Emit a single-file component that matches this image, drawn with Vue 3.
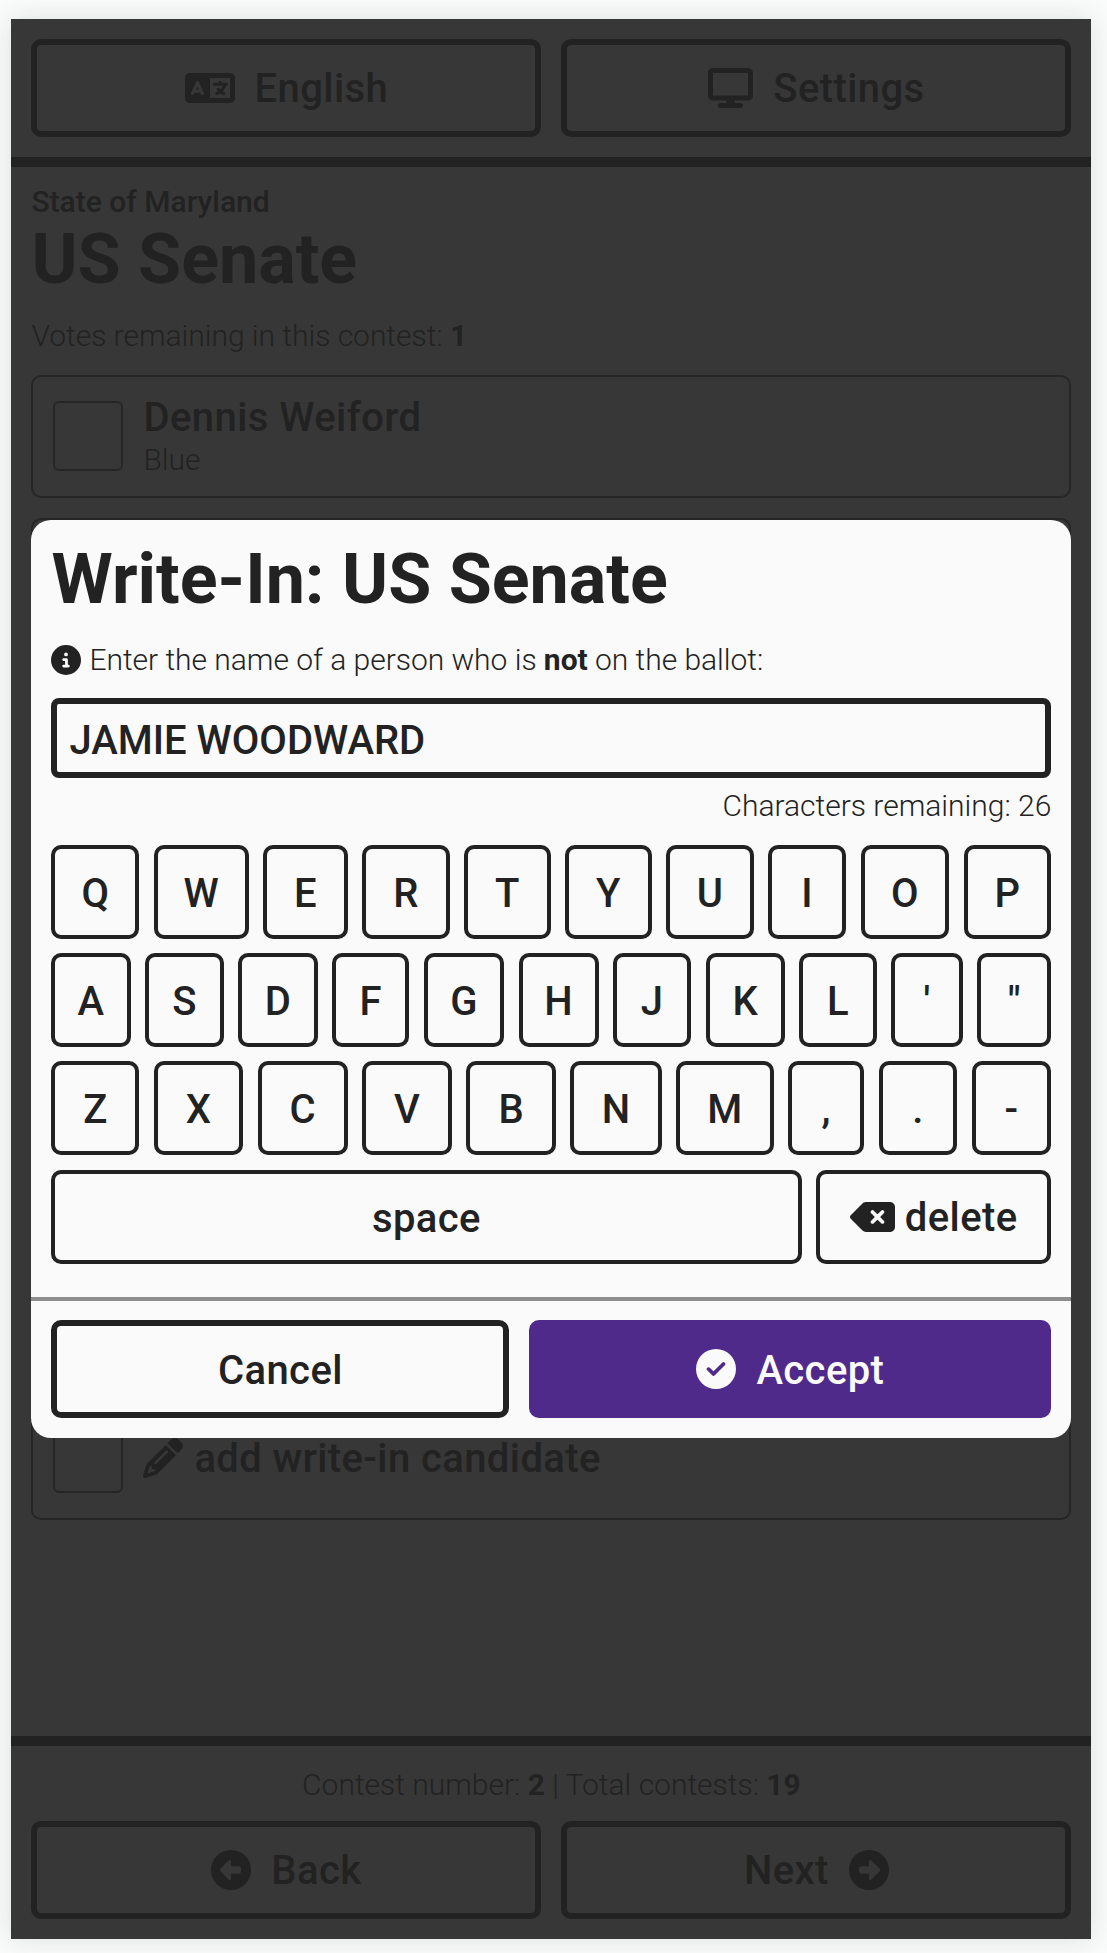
<script setup>
import { h } from 'vue'

const icons = {
  language: [640, 'M0 128C0 92.7 28.7 64 64 64H256h48 16H576c35.3 0 64 28.7 64 64V384c0 35.3-28.7 64-64 64H320 304 256 64c-35.3 0-64-28.7-64-64V128zm320 0V384H576V128H320zM178.3 175.9c-3.2-7.2-10.4-11.9-18.3-11.9s-15.1 4.7-18.3 11.9l-64 144c-4.5 10.1 .1 21.9 10.2 26.4s21.9-.1 26.4-10.2l8.9-20.1h73.6l8.9 20.1c4.5 10.1 16.3 14.6 26.4 10.2s14.6-16.3 10.2-26.4l-64-144zM160 233.2L179 276H141l19-42.8zM448 164c11 0 20 9 20 20v4h44 16c11 0 20 9 20 20s-9 20-20 20h-2l-1.6 4.5c-8.9 24.4-22.4 46.6-39.6 65.4c.9 .6 1.8 1.1 2.7 1.6l18.9 11.3c9.5 5.7 12.5 18 6.9 27.4s-18 12.5-27.4 6.9l-18.9-11.3c-4.5-2.7-8.8-5.5-13.1-8.5c-10.6 7.5-21.9 14-34 19.4l-3.6 1.6c-10.1 4.5-21.9-.1-26.4-10.2s.1-21.9 10.2-26.4l3.6-1.6c6.4-2.9 12.6-6.1 18.5-9.8l-12.2-12.2c-7.8-7.8-7.8-20.5 0-28.3s20.5-7.8 28.3 0l14.6 14.6 .5 .5c12.4-13.1 22.5-28.3 29.8-45H448 376c-11 0-20-9-20-20s9-20 20-20h52v-4c0-11 9-20 20-20z'],
  display: [576, 'M64 0C28.7 0 0 28.7 0 64V352c0 35.3 28.7 64 64 64H240l-10.7 32H160c-17.7 0-32 14.3-32 32s14.3 32 32 32H416c17.7 0 32-14.3 32-32s-14.3-32-32-32H346.7L336 416H512c35.3 0 64-28.7 64-64V64c0-35.3-28.7-64-64-64H64zM512 64V352H64V64H512z'],
  pencil: [512, 'M410.3 231l11.3-11.3-33.9-33.9-62.1-62.1L291.7 89.8l-11.3 11.3-22.6 22.6L58.6 322.9c-10.4 10.4-18 23.3-22.2 37.4L1 480.7c-2.5 8.4-.2 17.5 6.1 23.7s15.3 8.5 23.7 6.1l120.3-35.4c14.1-4.2 27-11.8 37.4-22.2L387.7 253.7 410.3 231zM160 399.4l-9.1 22.7c-4 3.1-8.5 5.4-13.3 6.9L59.4 452l23-78.1c1.4-4.9 3.8-9.4 6.9-13.3l22.7-9.1v32c0 8.8 7.2 16 16 16h32zM362.7 18.7L348.3 33.2 325.7 55.8 314.3 67.1l33.9 33.9 62.1 62.1 33.9 33.9 11.3-11.3 22.6-22.6 14.5-14.5c25-25 25-65.5 0-90.5L453.3 18.7c-25-25-65.5-25-90.5 0zm-47.4 168l-144 144c-6.2 6.2-16.4 6.2-22.6 0s-6.2-16.4 0-22.6l144-144c6.2-6.2 16.4-6.2 22.6 0s6.2 16.4 0 22.6z'],
  info: [512, 'M256 512A256 256 0 1 0 256 0a256 256 0 1 0 0 512zM216 336h24V272H216c-13.3 0-24-10.7-24-24s10.7-24 24-24h48c13.3 0 24 10.7 24 24v88h8c13.3 0 24 10.7 24 24s-10.7 24-24 24H216c-13.3 0-24-10.7-24-24s10.7-24 24-24zm40-208a32 32 0 1 1 0 64 32 32 0 1 1 0-64z'],
  backspace: [576, 'M576 128c0-35.3-28.7-64-64-64H205.3c-17 0-33.3 6.7-45.3 18.7L9.4 233.4c-6 6-9.4 14.1-9.4 22.6s3.4 16.6 9.4 22.6L160 429.3c12 12 28.3 18.7 45.3 18.7H512c35.3 0 64-28.7 64-64V128zM271 175c9.4-9.4 24.6-9.4 33.9 0l47 47 47-47c9.4-9.4 24.6-9.4 33.9 0s9.4 24.6 0 33.9l-47 47 47 47c9.4 9.4 9.4 24.6 0 33.9s-24.6 9.4-33.9 0l-47-47-47 47c-9.4 9.4-24.6 9.4-33.9 0s-9.4-24.6 0-33.9l47-47-47-47c-9.4-9.4-9.4-24.6 0-33.9z'],
  check: [512, 'M256 512A256 256 0 1 0 256 0a256 256 0 1 0 0 512zM369 209L241 337c-9.4 9.4-24.6 9.4-33.9 0l-64-64c-9.4-9.4-9.4-24.6 0-33.9s24.6-9.4 33.9 0l47 47L335 175c9.4-9.4 24.6-9.4 33.9 0s9.4 24.6 0 33.9z'],
  left: [512, 'M512 256A256 256 0 1 0 0 256a256 256 0 1 0 512 0zM116.7 244.7l112-112c4.6-4.6 11.5-5.9 17.4-3.5s9.9 8.3 9.9 14.8l0 64 96 0c17.7 0 32 14.3 32 32l0 32c0 17.7-14.3 32-32 32l-96 0 0 64c0 6.5-3.9 12.3-9.9 14.8s-12.9 1.1-17.4-3.5l-112-112c-6.2-6.2-6.2-16.4 0-22.6z'],
  right: [512, 'M0 256a256 256 0 1 0 512 0A256 256 0 1 0 0 256zM395.3 267.3l-112 112c-4.6 4.6-11.5 5.9-17.4 3.5s-9.9-8.3-9.9-14.8l0-64-96 0c-17.7 0-32-14.3-32-32l0-32c0-17.7 14.3-32 32-32l96 0 0-64c0-6.5 3.9-12.3 9.9-14.8s12.9-1.1 17.4 3.5l112 112c6.2 6.2 6.2 16.4 0 22.6z'],
}

const Icon = ({ name }) =>
  h('svg', { viewBox: `0 0 ${icons[name][0]} 512`, height: '1em', fill: 'currentColor', 'fill-rule': 'evenodd' }, [
    h('path', { d: icons[name][1] }),
  ])
Icon.props = ['name']

// Each key grows in proportion to its weight within the row.
const rows = [
  { keys: 'QWERTYUIOP', weights: [88, 95.6, 84.7, 87.3, 86.4, 86.6, 87.3, 77.2, 88.6, 87.8] },
  { keys: 'ASDFGHJKL\'"', weights: [79.4, 78.8, 79.5, 77.3, 80.7, 80.2, 78, 79.5, 77.4, 71.1, 73.4] },
  { keys: 'ZXCVBNM,.-', weights: [88, 89.6, 90.4, 89.9, 89.6, 91.7, 98.4, 75.2, 77.3, 79] },
].map(({ keys, weights }) => keys.split('').map((label, i) => ({ label, weight: weights[i] })))
</script>

<template>
  <div class="page">
    <div class="screen">
      <header class="bar top">
        <div class="btn"><Icon name="language" /><span>English</span></div>
        <div class="btn"><Icon name="display" /><span>Settings</span></div>
      </header>

      <main class="contest">
        <div class="district">State of Maryland</div>
        <h1>US Senate</h1>
        <p class="votes">Votes remaining in this contest: <b>1</b></p>
        <div class="card">
          <i class="box"></i>
          <div class="who">
            <div class="name">Dennis Weiford</div>
            <div class="party">Blue</div>
          </div>
        </div>
        <div class="card filler"></div>
        <div class="card">
          <i class="box"></i>
          <div class="writein"><Icon name="pencil" /><span>add write-in candidate</span></div>
        </div>
      </main>

      <footer class="foot">
        <div class="count">Contest number: <b>2</b> | Total contests: <b>19</b></div>
        <div class="bar">
          <div class="btn"><Icon name="left" /><span>Back</span></div>
          <div class="btn"><span>Next</span><Icon name="right" /></div>
        </div>
      </footer>

      <section class="modal">
        <div class="body">
          <h1>Write-In: US Senate</h1>
          <p class="hint"><Icon name="info" /><span>Enter the name of a person who is <b>not</b> on the ballot:</span></p>
          <div class="field">JAMIE WOODWARD</div>
          <div class="remaining">Characters remaining: 26</div>
          <div class="keyboard">
            <div v-for="(row, i) in rows" :key="i" class="row">
              <div v-for="k in row" :key="k.label" class="key" :style="{ flexGrow: k.weight }">{{ k.label }}</div>
            </div>
            <div class="row">
              <div class="key space">space</div>
              <div class="key delete"><Icon name="backspace" /><span>delete</span></div>
            </div>
          </div>
        </div>
        <div class="actions">
          <div class="btn cancel"><span>Cancel</span></div>
          <div class="btn accept"><Icon name="check" /><span>Accept</span></div>
        </div>
      </section>
    </div>
  </div>
</template>

<style>
body {
  margin: 0;
  background: #fafbfb;
}
</style>

<style scoped>
.page {
  box-sizing: border-box;
  width: 1107px;
  height: 1953px;
  padding: 18.5px 0 0 11.4px;
  overflow: hidden;
  font-family: Roboto, 'Liberation Sans', sans-serif;
  font-size: 30px;
  line-height: 36px;
  font-weight: 300;
  color: #222;
}
.page * {
  box-sizing: border-box;
}
svg {
  display: block;
  flex: none;
}
h1,
p {
  margin: 0;
}
b {
  font-weight: 700;
}
h1 {
  font-size: 70px;
  line-height: 76px;
  font-weight: 700;
}
.screen {
  position: relative;
  display: flex;
  flex-direction: column;
  width: 1080px;
  height: 1920px;
  background: #373737;
  box-shadow: 0 0 26px rgba(50, 65, 60, 0.14);
}
.bar {
  display: flex;
  gap: 20px;
}
.bar.top {
  padding: 20px;
  border-bottom: 10px solid #222;
}
.btn {
  flex: 1;
  display: flex;
  align-items: center;
  justify-content: center;
  gap: 20px;
  height: 98px;
  border: 6px solid #222;
  border-radius: 10px;
  font-size: 40px;
  line-height: 48px;
  font-weight: 500;
  letter-spacing: 0.4px;
}
.btn span {
  padding-top: 2px;
}
.contest {
  flex: 1;
  padding: 17px 20px 0;
}
.district {
  font-weight: 500;
}
.contest h1 {
  padding-top: 1px;
}
.votes {
  margin: 21px 0;
  letter-spacing: -0.02px;
}
.card {
  display: flex;
  gap: 20px;
  height: 123px;
  margin-bottom: 20px;
  padding: 18px 20px 0;
  border: 2px solid #262626;
  border-radius: 10px;
}
.filler {
  height: 859px;
}
.box {
  width: 70px;
  height: 70px;
  margin-top: 6px;
  border: 2px solid #262626;
  border-radius: 6px;
}
.name {
  font-size: 40px;
  line-height: 46px;
  font-weight: 500;
  letter-spacing: 0.43px;
}
.party {
  padding-top: 1px;
}
.writein {
  display: flex;
  align-items: center;
  gap: 11px;
  height: 46px;
  margin-top: 18px;
  font-size: 40px;
  font-weight: 500;
  letter-spacing: 0.4px;
}
.writein span {
  padding-top: 3px;
}
.foot {
  padding: 0 20px 20px;
  border-top: 10px solid #222;
}
.count {
  margin: 21px 0 18px;
  text-align: center;
}
.modal {
  position: absolute;
  left: 20px;
  top: 501px;
  width: 1040px;
  height: 918px;
  border-radius: 20px;
  background: #fafafa;
}
.body {
  height: 777px;
  padding: 21px 20px 0;
}
.hint {
  display: flex;
  align-items: center;
  gap: 8px;
  margin-top: 25px;
  letter-spacing: -0.02px;
}
.field {
  height: 80px;
  margin: 20.5px 0 9.5px;
  padding: 0 12px;
  border: 6px solid #222;
  border-radius: 8px;
  font-size: 40px;
  line-height: 73px;
  font-weight: 500;
}
.remaining {
  text-align: right;
}
.keyboard {
  display: flex;
  flex-direction: column;
  gap: 14.4px;
  margin-top: 21.2px;
}
.row {
  display: flex;
  gap: 14.4px;
}
.key {
  flex: 1 0 0;
  height: 94px;
  border: 4px solid #222;
  border-radius: 10px;
  text-align: center;
  font-size: 40px;
  line-height: 90px;
  font-weight: 500;
  letter-spacing: 0.4px;
}
.key.delete {
  flex: 0 0 235.5px;
  display: flex;
  align-items: center;
  justify-content: center;
  gap: 10px;
}
.key.delete span {
  padding-top: 3px;
}
.actions {
  display: flex;
  gap: 20px;
  padding: 19px 20px 0;
  border-top: 4px solid #8d8d8d;
}
.actions .btn span {
  padding-top: 4px;
}
.cancel {
  flex: 0 0 458px;
}
.accept {
  border: 0;
  background: #4f2a8b;
  color: #fafafa;
}
</style>
